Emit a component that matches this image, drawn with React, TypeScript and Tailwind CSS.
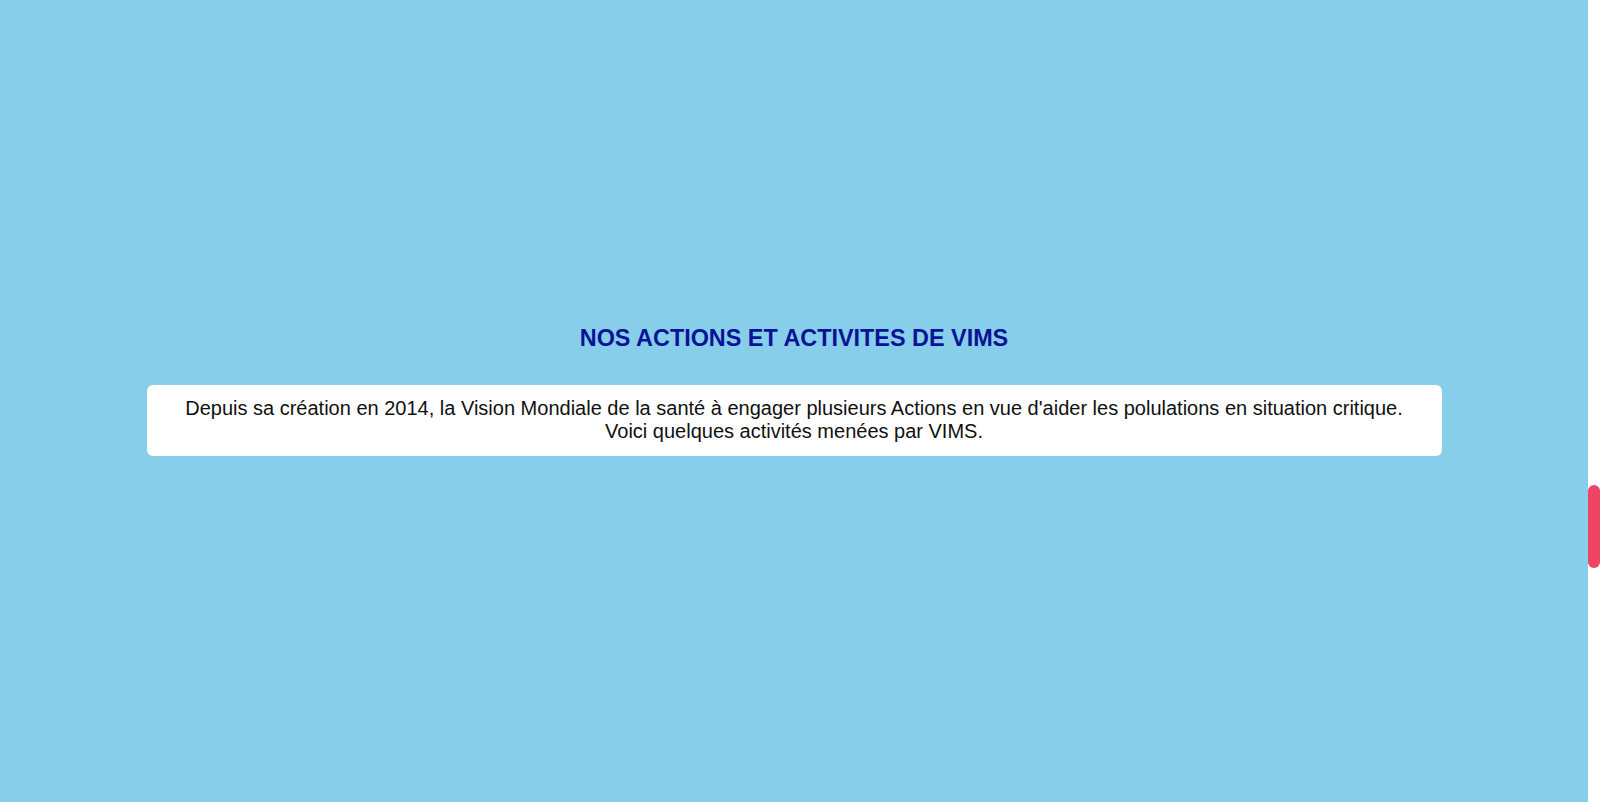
export default function App() {
  return (
    <div className="flex h-[802px] w-full overflow-hidden" style={{ fontFamily: '"Liberation Sans", Arial, sans-serif' }}>
      <main className="flex-1 bg-[#87ceeb] pt-[325px]">
        <h2 className="text-center text-[23.4px] font-bold leading-[normal] text-[#0a1296]">
          NOS ACTIONS ET ACTIVITES DE VIMS
        </h2>
        <div className="mx-auto mt-[33px] w-[1295px] rounded-md bg-white pt-[12px] pb-[13px] text-center text-[20px] leading-[normal] text-[#111]">
          <p>
            Depuis sa création en 2014, la Vision Mondiale de la santé à engager plusieurs Actions en vue d'aider les polulations en situation critique.
          </p>
          <p>Voici quelques activités menées par VIMS.</p>
        </div>
      </main>
      <aside className="w-[12px] bg-white pt-[485px]">
        <div className="h-[83px] w-[12px] rounded-full bg-[#ef4565]" />
      </aside>
    </div>
  );
}
